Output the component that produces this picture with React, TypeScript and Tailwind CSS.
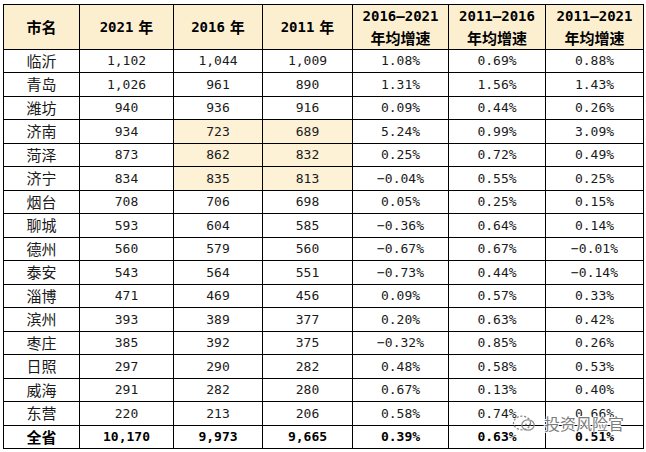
import React from 'react';

type Row = {
  city: string;
  v21: string;
  v16: string;
  v11: string;
  g1: string;
  g2: string;
  g3: string;
  hl?: boolean;
  total?: boolean;
};

const rows: Row[] = [
  { city: '临沂', v21: '1,102', v16: '1,044', v11: '1,009', g1: '1.08%', g2: '0.69%', g3: '0.88%' },
  { city: '青岛', v21: '1,026', v16: '961', v11: '890', g1: '1.31%', g2: '1.56%', g3: '1.43%' },
  { city: '潍坊', v21: '940', v16: '936', v11: '916', g1: '0.09%', g2: '0.44%', g3: '0.26%' },
  { city: '济南', v21: '934', v16: '723', v11: '689', g1: '5.24%', g2: '0.99%', g3: '3.09%', hl: true },
  { city: '菏泽', v21: '873', v16: '862', v11: '832', g1: '0.25%', g2: '0.72%', g3: '0.49%', hl: true },
  { city: '济宁', v21: '834', v16: '835', v11: '813', g1: '−0.04%', g2: '0.55%', g3: '0.25%', hl: true },
  { city: '烟台', v21: '708', v16: '706', v11: '698', g1: '0.05%', g2: '0.25%', g3: '0.15%' },
  { city: '聊城', v21: '593', v16: '604', v11: '585', g1: '−0.36%', g2: '0.64%', g3: '0.14%' },
  { city: '德州', v21: '560', v16: '579', v11: '560', g1: '−0.67%', g2: '0.67%', g3: '−0.01%' },
  { city: '泰安', v21: '543', v16: '564', v11: '551', g1: '−0.73%', g2: '0.44%', g3: '−0.14%' },
  { city: '淄博', v21: '471', v16: '469', v11: '456', g1: '0.09%', g2: '0.57%', g3: '0.33%' },
  { city: '滨州', v21: '393', v16: '389', v11: '377', g1: '0.20%', g2: '0.63%', g3: '0.42%' },
  { city: '枣庄', v21: '385', v16: '392', v11: '375', g1: '−0.32%', g2: '0.85%', g3: '0.26%' },
  { city: '日照', v21: '297', v16: '290', v11: '282', g1: '0.48%', g2: '0.58%', g3: '0.53%' },
  { city: '威海', v21: '291', v16: '282', v11: '280', g1: '0.67%', g2: '0.13%', g3: '0.40%' },
  { city: '东营', v21: '220', v16: '213', v11: '206', g1: '0.58%', g2: '0.74%', g3: '0.66%' },
  { city: '全省', v21: '10,170', v16: '9,973', v11: '9,665', g1: '0.39%', g2: '0.63%', g3: '0.51%', total: true },
];

const cjk = "font-['Noto_Sans_CJK_SC',sans-serif]";
const mono = "font-['DejaVu_Sans_Mono','Liberation_Mono',monospace]";

const Num = ({ v, bold, hl }: { v: string; bold?: boolean; hl?: boolean }) => (
  <div
    className={`flex items-center justify-center ${hl ? 'bg-[#fdf1d6]' : 'bg-white'} ${mono} text-[13px] ${
      bold ? 'font-bold text-black' : 'text-[#1a1a1a]'
    }`}
  >
    {v}
  </div>
);

const YearHead = ({ y }: { y: string }) => (
  <div className="flex items-center justify-center gap-[5px] bg-[#fcefd0] text-black">
    <span className={`${mono} text-[14px] font-bold`}>{y}</span>
    <span className={`${cjk} text-[15px] font-bold`}>年</span>
  </div>
);

const RateHead = ({ r }: { r: string }) => (
  <div className="flex flex-col items-center justify-center bg-[#fcefd0] text-black leading-[21px]">
    <span className={`${mono} text-[14px] font-bold`}>{r}</span>
    <span className={`${cjk} text-[15px] font-bold`}>年均增速</span>
  </div>
);

export default function App() {
  return (
    <div className="relative w-[646px] h-[452px] bg-white overflow-hidden">
      <div className="ml-[3px] mt-[4px] w-[641px] bg-black p-px grid gap-px grid-cols-[75px_93px_88px_89px_95px_96px_97px] grid-rows-[44px_repeat(8,22px_23px)_22px]">
        <div className={`flex items-center justify-center bg-[#fcefd0] ${cjk} text-[15px] font-bold text-black`}>
          市名
        </div>
        <YearHead y="2021" />
        <YearHead y="2016" />
        <YearHead y="2011" />
        <RateHead r="2016–2021" />
        <RateHead r="2011–2016" />
        <RateHead r="2011–2021" />

        {rows.map((r) => (
          <React.Fragment key={r.city}>
            <div
              className={`flex items-center justify-center bg-white ${cjk} text-[15px] ${
                r.total ? 'font-bold text-black' : 'text-[#1a1a1a]'
              }`}
            >
              {r.city}
            </div>
            <Num v={r.v21} bold={r.total} />
            <Num v={r.v16} bold={r.total} hl={r.hl} />
            <Num v={r.v11} bold={r.total} hl={r.hl} />
            <Num v={r.g1} bold={r.total} />
            <Num v={r.g2} bold={r.total} />
            <Num v={r.g3} bold={r.total} />
          </React.Fragment>
        ))}
      </div>

      {/* watermark */}
      <div className="absolute left-[512px] top-[411px] flex items-center gap-[6px]">
        <svg width="26" height="17" viewBox="0 0 26 17" fill="none" stroke="#8c8c8c" strokeWidth="1.3">
          <ellipse cx="10" cy="8" rx="8.5" ry="6.8" strokeDasharray="2.2 1.6" />
          <ellipse cx="16" cy="10" rx="6.2" ry="5.2" />
          <circle cx="14" cy="9.5" r="0.9" fill="#8c8c8c" stroke="none" />
          <circle cx="18" cy="9.5" r="0.9" fill="#8c8c8c" stroke="none" />
        </svg>
        <span
          className={`${cjk} text-[16px] text-[#7c7c7c] [text-shadow:1px_0_0_#fff,-1px_0_0_#fff,0_1px_0_#fff,0_-1px_0_#fff]`}
        >
          投资风险官
        </span>
      </div>
    </div>
  );
}
